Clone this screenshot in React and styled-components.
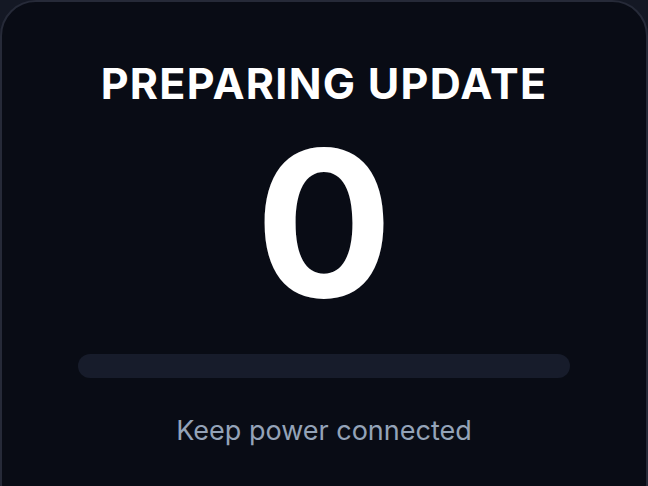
import React from "react";
import styled, { createGlobalStyle } from "styled-components";

const GlobalStyle = createGlobalStyle`
  html, body {
    margin: 0;
    padding: 0;
    background: #141824;
  }
  body {
    font-family: Inter, "Noto Sans", sans-serif;
    overflow: hidden;
  }
`;

const Card = styled.div`
  box-sizing: border-box;
  width: 648px;
  min-height: 520px;
  background: #090c15;
  border: 2px solid #262a38;
  border-radius: 36px;
  padding: 60px 76px 0;
  display: flex;
  flex-direction: column;
  align-items: center;
`;

const Title = styled.h1`
  margin: 0;
  font-size: 43px;
  line-height: 1;
  font-weight: 700;
  color: #ffffff;
  letter-spacing: 1.3px;
`;

const Counter = styled.div`
  margin-top: 16px;
  font-size: 204px;
  line-height: 1;
  font-weight: 700;
  color: #ffffff;
`;

const Track = styled.div`
  margin-top: 29px;
  width: 100%;
  height: 24px;
  border-radius: 12px;
  background: #171c2b;
  overflow: hidden;
`;

const Fill = styled.div`
  height: 100%;
  background: #3b82f6;
  border-radius: 12px;
`;

const Hint = styled.p`
  margin: 39px 0 0;
  font-size: 27px;
  line-height: 1;
  color: #94a3b8;
`;

export default function App() {
  const progress = 0;
  return (
    <>
      <GlobalStyle />
      <Card>
        <Title>PREPARING UPDATE</Title>
        <Counter>{progress}</Counter>
        <Track>
          <Fill style={{ width: `${progress}%` }} />
        </Track>
        <Hint>Keep power connected</Hint>
      </Card>
    </>
  );
}
